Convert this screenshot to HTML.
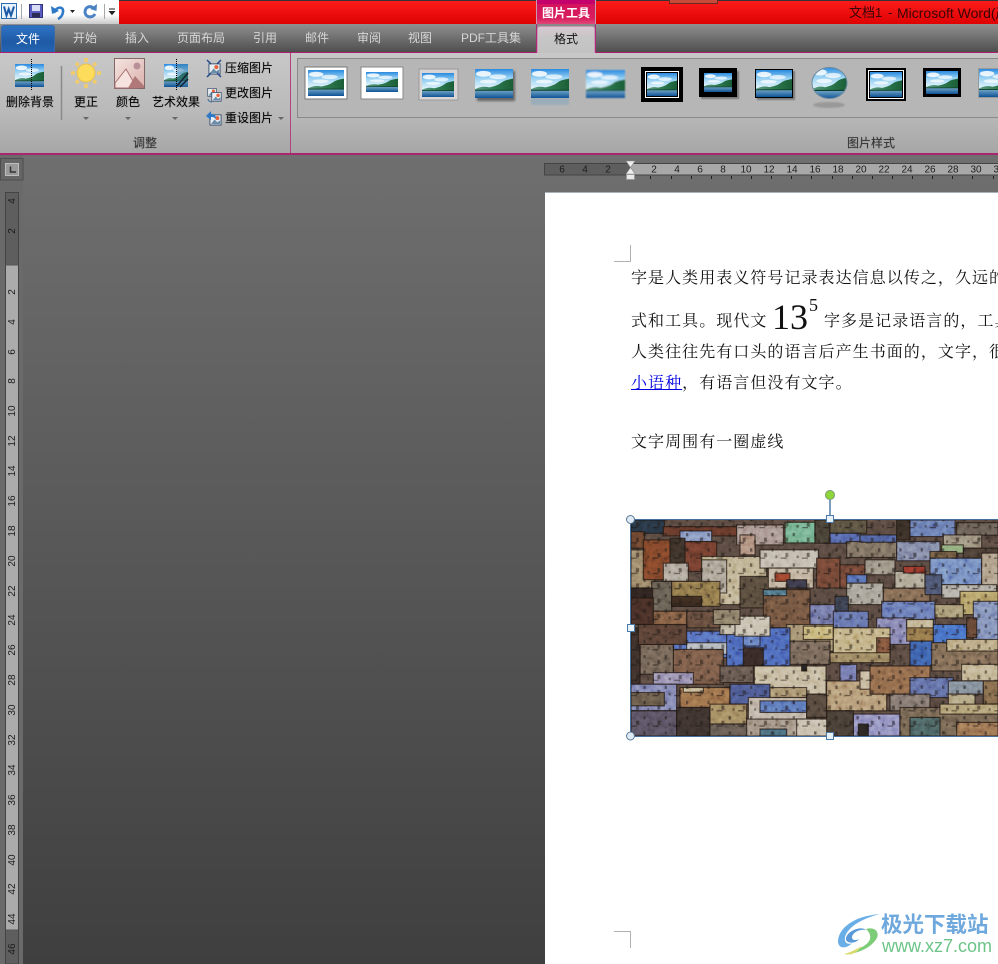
<!DOCTYPE html>
<html lang="zh"><head><meta charset="utf-8"><title>文档1 - Microsoft Word</title>
<style>
html,body{margin:0;padding:0;width:998px;height:964px;overflow:hidden;background:#555}
body{position:relative;font-family:"Liberation Sans","WenQuanYi Zen Hei","Noto Sans CJK SC",sans-serif;font-size:12px}
div,span.a,svg.a{position:absolute}
.t{white-space:nowrap;line-height:16px}
.tab{top:30px;color:#d6d6d6;font-size:12px}
.lb{color:#000;font-size:12px;white-space:nowrap;line-height:16px;text-shadow:0 0 1px rgba(0,0,0,.3)}
.doc{position:absolute;left:631px;white-space:nowrap;font-family:"Liberation Serif","Noto Serif CJK SC",serif;font-size:16px;letter-spacing:1.05px;color:#111;line-height:20px}
.arr{width:0;height:0;border-left:3px solid transparent;border-right:3px solid transparent;border-top:3px solid #666}
</style></head><body>
<svg width="0" height="0" style="position:absolute"><defs>
<linearGradient id="sky" x1="0" y1="0" x2="0" y2="1"><stop offset="0" stop-color="#2a8ae0"/><stop offset=".3" stop-color="#96d0f2"/><stop offset=".65" stop-color="#dff2fa"/></linearGradient>
<linearGradient id="wat" x1="0" y1="0" x2="0" y2="1"><stop offset="0" stop-color="#7eb0cc"/><stop offset="1" stop-color="#0e5296"/></linearGradient>
<linearGradient id="hil" x1="0" y1="0" x2="1" y2="0"><stop offset="0" stop-color="#5e9c88"/><stop offset=".5" stop-color="#2e7a50"/><stop offset="1" stop-color="#1a5e36"/></linearGradient>
<symbol id="L" viewBox="0 0 40 30" preserveAspectRatio="none">
<rect width="40" height="30" fill="url(#sky)"/>
<ellipse cx="9" cy="5" rx="8" ry="3" fill="#fff" opacity=".85"/><ellipse cx="24" cy="8" rx="9" ry="2.5" fill="#fff" opacity=".7"/><ellipse cx="14" cy="13" rx="9" ry="2" fill="#fff" opacity=".7"/>
<rect y="21" width="40" height="9" fill="url(#wat)"/>
<path d="M0 21 C6 18 10 18 15 19 C20 18 24 17 28 14 C32 11 36 11 40 10 V22 H0Z" fill="url(#hil)"/>
<path d="M0 21.500H40V22.500H0Z" fill="#0c3d2a"/>
</symbol>
<symbol id="P" viewBox="0 0 14 14"><rect x="1" y="2" width="12" height="11" fill="#e8eef4" stroke="#39506e"/><path d="M2 12 L6 7 L9 10 L12 8 V12Z" fill="#6c8ca8"/><circle cx="9" cy="5.5" r="2.2" fill="#e8643c"/></symbol>
</defs></svg>

<!-- title bar -->
<div style="left:0;top:0;width:119px;height:24px;background:linear-gradient(#fff 0,#fff 60%,#c9c9c9 100%)"></div>
<div style="left:119px;top:0;width:879px;height:24px;background:linear-gradient(#333 0,#333 1px,#fb1b1b 1px,#df0202 100%)"></div>
<div style="left:669px;top:0;width:49px;height:4px;background:#c84a3a;border:1px solid #6a2a20;border-top:0;box-sizing:border-box"></div>
<div class="t" style="left:849px;top:5px;font-size:13px;color:#3a0505">文档1</div>
<div class="t" style="left:888px;top:5px;font-size:13px;color:#3a0505">-</div>
<div class="t" style="left:897px;top:5px;font-size:14px;color:#3a0505">Microsoft Word(产</div>

<!-- QAT icons -->
<svg class="a" style="left:0;top:0" width="119" height="24">
<rect x="1.5" y="3.5" width="15" height="15" fill="#e8f2fb" stroke="#2a6cb0"/><path d="M4 6.5 L6.5 15.5 L8.7 9 L11 15.5 L14 6.5" fill="none" stroke="#1d5aa6" stroke-width="2"/>
<path d="M21.5 4V19M104.500 4V19" stroke="#a8a8a8"/>
<rect x="29.500" y="4.500" width="13" height="13" fill="#5a5cc0" stroke="#33337a"/><rect x="32" y="5" width="8" height="6" fill="#d8dcf4"/><rect x="32" y="13" width="8" height="4" fill="#2b2b55"/>
<path d="M54 13 C56 6 64 6 63 12 C62.500 16 60 18 58 19" fill="none" stroke="#2e78c8" stroke-width="2.600"/><path d="M51 6 L52 14 L59 11Z" fill="#2e78c8"/>
<path d="M70 10h5l-2.500 3z" fill="#222"/>
<path d="M94 9 C92 5 85 6 85 12 C85 17 92 19 95 14" fill="none" stroke="#4b82c4" stroke-width="3"/><path d="M97 4 L96.500 11 L90 9Z" fill="#4b82c4"/>
<path d="M109 9h6M109.500 11.500h5l-2.500 3z" stroke="#222" fill="#222"/>
</svg>

<!-- tab strip -->
<div style="left:0;top:24px;width:998px;height:28px;background:linear-gradient(#909090,#4e4e4e)"></div>
<div style="left:0;top:52px;width:998px;height:1px;background:#a8206f"></div>
<div class="t" style="left:1px;top:25px;width:54px;height:27px;background:linear-gradient(#2f74c4,#1f5aa6 60%,#2364b0);border:1px solid #3a6aa8;border-bottom:0;box-sizing:border-box;border-radius:3px 3px 0 0;color:#fff;text-align:center;line-height:26px;font-size:12px">文件</div>
<div class="t tab" style="left:73px">开始</div>
<div class="t tab" style="left:125px">插入</div>
<div class="t tab" style="left:177px">页面布局</div>
<div class="t tab" style="left:253px">引用</div>
<div class="t tab" style="left:305px">邮件</div>
<div class="t tab" style="left:357px">审阅</div>
<div class="t tab" style="left:408px">视图</div>
<div class="t tab" style="left:461px">PDF工具集</div>

<!-- contextual tab -->
<div style="left:536px;top:0;width:60px;height:24px;background:linear-gradient(#c4006c 0,#c4006c 4px,#d4145e 4px,#d81c5c 18px,#e04878 24px);box-sizing:border-box;border-left:1px solid #c89ab0;border-right:1px solid #c89ab0"></div>
<div class="t" style="left:536px;top:5px;width:60px;text-align:center;color:#fff;font-weight:bold;font-size:12px">图片工具</div>
<div style="left:536px;top:24px;width:60px;height:29px;background:linear-gradient(#8a8a8a,#505050);border-left:1px solid #b02878;border-right:1px solid #b02878;box-sizing:border-box"></div>
<div class="t" style="left:537px;top:26px;width:58px;height:28px;background:linear-gradient(#d8c8d0,#c6c6c6 40%,#c2c2c2);border:1px solid #c898b4;border-bottom:0;box-sizing:border-box;border-radius:3px 3px 0 0;text-align:center;line-height:25px;color:#111;font-size:12px">格式</div>

<!-- ribbon -->
<div style="left:0;top:53px;width:998px;height:101px;background:linear-gradient(#c8c8c8,#b9b9b9 60%,#a6a6a6)"></div>
<div style="left:0;top:153px;width:998px;height:2px;background:#a8266f"></div>
<div style="left:290px;top:53px;width:1px;height:100px;background:#b0447f"></div>
<div style="left:297px;top:58px;width:701px;height:60px;border:1px solid #8a8a8a;border-right:0;box-sizing:border-box;background:#b6b6b6"></div>

<svg class="a" style="left:0;top:53px" width="292" height="80">
<use href="#L" x="15" y="11" width="29" height="23"/>
<path d="M31.500 6V37" stroke="#000" stroke-dasharray="1 1"/>
<path d="M61.500 13V67" stroke="#8a8a8a" stroke-width="1.500"/>
<g stroke="#f3cc6a" stroke-width="3.500"><path d="M86 5V9M86 31V35M71 20H75M97 20H101M76 10L78.500 12.500M93.500 27.500L96 30M96 10L93.500 12.500M78.500 27.500L76 30"/></g>
<circle cx="86" cy="20" r="9" fill="#fcdc5a" stroke="#eac050"/>
<defs><linearGradient id="pk" x1="0" y1="0" x2="1" y2="1"><stop offset="0" stop-color="#f4e4e0"/><stop offset="1" stop-color="#dcb0ac"/></linearGradient></defs>
<rect x="114.500" y="5.500" width="30" height="30" fill="url(#pk)" stroke="#806868"/>
<path d="M115 30 L126 16 L137 35H115Z" fill="#f6e2de" stroke="#a87070"/><path d="M128 35 L135 23 L144 33V35Z" fill="#b07878"/><circle cx="137" cy="13" r="3.500" fill="#b89098"/>
<use href="#L" x="164" y="11" width="24" height="23"/>
<path d="M177 11H188V34H177Z" fill="#3878a0" opacity=".45"/><path d="M177 33L188 20M180 34L188 26" stroke="#123" stroke-width="1.500"/>
<path d="M176.500 6V37" stroke="#000" stroke-dasharray="1 1"/>
<use href="#P" x="208" y="9" width="13" height="13"/>
<path d="M207 7L211 11M221 7L217 11M207 24L211 20M221 24L217 20" stroke="#24488c" stroke-width="1.500"/>
<use href="#P" x="207" y="34" width="10" height="10"/><use href="#P" x="211" y="38" width="11" height="11"/>
<path d="M208 46c0 2 2 3 4 3" stroke="#3a6a9a" fill="none"/>
<use href="#P" x="209" y="60" width="13" height="13"/>
<path d="M206 63L211 58V61C214 61 216 62 216 66C214 64 213 64 211 64V67Z" fill="#2e78c8"/>
</svg>
<div class="lb" style="left:6px;top:94px">删除背景</div>
<div class="lb" style="left:74px;top:94px">更正</div>
<div class="lb" style="left:116px;top:94px">颜色</div>
<div class="lb" style="left:152px;top:94px">艺术效果</div>
<div class="arr" style="left:83px;top:117px"></div>
<div class="arr" style="left:125px;top:117px"></div>
<div class="arr" style="left:172px;top:117px"></div>
<div class="arr" style="left:278px;top:117px"></div>
<div class="lb" style="left:225px;top:60px">压缩图片</div>
<div class="lb" style="left:225px;top:85px">更改图片</div>
<div class="lb" style="left:225px;top:110px">重设图片</div>
<div class="lb" style="left:133px;top:135px;color:#333">调整</div>
<div class="lb" style="left:847px;top:135px;color:#333">图片样式</div>

<!-- gallery -->
<svg class="a" style="left:298px;top:59px" width="700" height="58" viewBox="298 59 700 58">
<defs><filter id="b2"><feGaussianBlur stdDeviation="1"/></filter><filter id="b1"><feGaussianBlur stdDeviation=".8"/></filter></defs>
<rect x="305" y="67" width="42" height="32" fill="#fff" stroke="#777"/><use href="#L" x="308" y="70" width="36" height="26"/>
<rect x="361" y="67" width="42" height="32" fill="#fff" stroke="#888"/><use href="#L" x="366" y="72" width="32" height="20"/>
<rect x="419" y="69" width="39" height="31" fill="#d8d4d4" stroke="#999"/><use href="#L" x="422" y="73" width="32" height="24"/>
<rect x="477" y="71" width="38" height="30" fill="#666" filter="url(#b2)"/><use href="#L" x="475" y="69" width="38" height="29"/>
<rect x="531" y="98" width="38" height="7" fill="#8aa8bc" opacity=".6" filter="url(#b1)"/><use href="#L" x="531" y="69" width="38" height="29"/>
<g filter="url(#b1)"><use href="#L" x="586" y="70" width="39" height="28"/></g>
<rect x="641" y="67" width="42" height="35" fill="#000"/><rect x="645.500" y="71.500" width="33" height="26" fill="#000" stroke="#fff"/><use href="#L" x="647" y="73" width="30" height="23"/>
<rect x="701" y="71" width="38" height="28" fill="#777" filter="url(#b1)"/><rect x="699" y="68" width="38" height="29" fill="#000"/><use href="#L" x="704" y="73" width="28" height="19"/>
<rect x="757" y="71" width="38" height="29" fill="#777" filter="url(#b1)"/><rect x="755" y="69" width="38" height="29" fill="#000"/><use href="#L" x="756" y="70" width="36" height="27"/>
<ellipse cx="829" cy="105" rx="16" ry="3" fill="#999" filter="url(#b1)"/><clipPath id="ov"><ellipse cx="829.500" cy="83" rx="17.500" ry="15.500"/></clipPath><g clip-path="url(#ov)"><use href="#L" x="812" y="67" width="35" height="32"/></g><ellipse cx="829.500" cy="83" rx="17.500" ry="15.500" fill="none" stroke="#6a8aa0"/>
<rect x="866" y="68" width="40" height="33" fill="#000"/><rect x="868.500" y="70.500" width="35" height="28" fill="#000" stroke="#fff"/><use href="#L" x="870" y="72" width="32" height="25"/>
<rect x="923" y="68" width="38" height="29" fill="#000"/><use href="#L" x="926" y="71" width="32" height="23"/>
<rect x="978" y="68" width="30" height="30" fill="#999"/><use href="#L" x="979" y="69" width="36" height="28"/>
</svg>

<!-- workspace -->
<div style="left:0;top:155px;width:998px;height:809px;background:linear-gradient(#6f6f6f,#3f3f3f)"></div>
<div style="left:0;top:155px;width:23px;height:809px;background:#6a6a6a"></div>

<!-- page -->
<div style="left:545px;top:192px;width:453px;height:772px;background:#fff;border-top:1px solid #a8b0bc;box-sizing:border-box"></div>

<!-- rulers -->
<svg class="a" style="left:0;top:155px" width="998" height="809" viewBox="0 155 998 809" font-family="Liberation Sans, sans-serif" font-size="10" fill="#1c1c1c" text-anchor="middle">
<rect x=".5" y="158.500" width="22.500" height="21.500" fill="#666" stroke="#4e4e4e"/>
<rect x="5.500" y="163.500" width="13" height="12" fill="#9a9a9a" stroke="#bdbdbd"/><path d="M10.500 166.500V172H16" stroke="#333" stroke-width="1.500" fill="none"/>
<rect x="5.500" y="192.500" width="13" height="771.500" fill="#5e5e5e" stroke="#444"/>
<rect x="6" y="265" width="12" height="665" fill="#ababab"/><path d="M6 265H18M6 930H18" stroke="#555"/>
<rect x="544.500" y="163.500" width="453.500" height="11.500" fill="#5e5e5e" stroke="#444"/>
<rect x="631" y="164" width="367" height="10.500" fill="#a8a8a8"/>
<path d="M650.500 176v3M671.500 176v3M691.500 176v3M711.500 176v3M731.500 176v3M751.500 176v3M771.500 176v3M791.500 176v3M811.500 176v3M832.500 176v3M852.500 176v3M872.500 176v3M892.500 176v3M912.500 176v3M932.500 176v3M952.500 176v3M972.500 176v3M993.500 176v3" stroke="#222"/>
<text x="562" y="172.500">6</text><text x="585" y="172.500">4</text><text x="608" y="172.500">2</text>
<text x="654" y="172.500">2</text><text x="677" y="172.500">4</text><text x="700" y="172.500">6</text><text x="723" y="172.500">8</text><text x="746" y="172.500">10</text><text x="769" y="172.500">12</text><text x="792" y="172.500">14</text><text x="815" y="172.500">16</text><text x="838" y="172.500">18</text><text x="861" y="172.500">20</text><text x="884" y="172.500">22</text><text x="907" y="172.500">24</text><text x="930" y="172.500">26</text><text x="953" y="172.500">28</text><text x="976" y="172.500">30</text><text x="999" y="172.500">32</text>
<g>
<text transform="translate(15,201) rotate(-90)">4</text><text transform="translate(15,231) rotate(-90)">2</text><text transform="translate(15,292) rotate(-90)">2</text><text transform="translate(15,322) rotate(-90)">4</text><text transform="translate(15,352) rotate(-90)">6</text><text transform="translate(15,381) rotate(-90)">8</text><text transform="translate(15,411) rotate(-90)">10</text><text transform="translate(15,441) rotate(-90)">12</text><text transform="translate(15,471) rotate(-90)">14</text><text transform="translate(15,501) rotate(-90)">16</text><text transform="translate(15,531) rotate(-90)">18</text><text transform="translate(15,561) rotate(-90)">20</text><text transform="translate(15,591) rotate(-90)">22</text><text transform="translate(15,620) rotate(-90)">24</text><text transform="translate(15,650) rotate(-90)">26</text><text transform="translate(15,680) rotate(-90)">28</text><text transform="translate(15,710) rotate(-90)">30</text><text transform="translate(15,740) rotate(-90)">32</text><text transform="translate(15,770) rotate(-90)">34</text><text transform="translate(15,800) rotate(-90)">36</text><text transform="translate(15,830) rotate(-90)">38</text><text transform="translate(15,860) rotate(-90)">40</text><text transform="translate(15,889) rotate(-90)">42</text><text transform="translate(15,919) rotate(-90)">44</text><text transform="translate(15,949) rotate(-90)">46</text>
</g>
<path d="M626 161H635L630.500 167.500L635 174H626L630.500 167.500Z" fill="#eee" stroke="#888" stroke-width=".6"/><rect x="626.500" y="174.500" width="8" height="5" fill="#e8e8e8" stroke="#999"/>
<path d="M630.500 245V261.500H614M614 931.500H630.500V948" fill="none" stroke="#b0b0b0"/>
</svg>

<!-- text -->
<div class="doc" style="top:269px">字是人类用表义符号记录表达信息以传之，久远的</div>
<div class="doc" style="top:312px">式和工具。现代文</div>
<div class="a" style="left:772px;top:296px;font-family:'Liberation Serif',serif;font-size:36px;line-height:42px;letter-spacing:0;color:#111;white-space:nowrap">13</div>
<div class="a" style="left:809px;top:295px;font-family:'Liberation Serif',serif;font-size:18px;line-height:20px;color:#111">5</div>
<div class="doc" style="top:312px;left:824px">字多是记录语言的，工具</div>
<div class="doc" style="top:343px">人类往往先有口头的语言后产生书面的，文字，很</div>
<div class="doc" style="top:374px"><span style="color:#0000e0;text-decoration:underline">小语种</span>，有语言但没有文字。</div>
<div class="doc" style="top:433px">文字周围有一圈虚线</div>

<!-- picture -->
<svg class="a" style="left:631px;top:520px" width="367" height="216" viewBox="33 105 1101 651" preserveAspectRatio="none">
<defs>
<filter id="n" x="0" y="0" width="100%" height="100%"><feTurbulence type="fractalNoise" baseFrequency=".06" numOctaves="3" seed="4"/><feColorMatrix type="saturate" values="0"/><feComponentTransfer><feFuncR type="linear" slope="1.8" intercept="-.4"/><feFuncG type="linear" slope="1.8" intercept="-.4"/><feFuncB type="linear" slope="1.8" intercept="-.4"/><feFuncA type="linear" slope="0" intercept="1"/></feComponentTransfer></filter>
<pattern id="w" width="64" height="46" patternUnits="userSpaceOnUse"><rect x="6" y="6" width="7" height="10" fill="#1e1a18"/><rect x="48" y="20" width="9" height="13" fill="#231d1a"/><rect x="18" y="28" width="6" height="8" fill="#2a2420"/><rect x="34" y="34" width="18" height="4" fill="#1a1614"/></pattern>
</defs>
<rect x="33" y="105" width="1101" height="651" fill="#5c4c44"/>
<g stroke="#1e1612" stroke-width="3.500" stroke-opacity=".75">
<rect x="33" y="105" width="100" height="40" fill="#27384a"/><rect x="130" y="125" width="220" height="28" fill="#6a3b2c"/><rect x="33" y="140" width="40" height="50" fill="#6e4630"/>
<rect x="180" y="138" width="95" height="32" fill="#8ea4d8"/><rect x="350" y="120" width="140" height="60" fill="#b8a29c"/><rect x="360" y="150" width="45" height="60" fill="#c09a88"/>
<rect x="495" y="112" width="90" height="62" fill="#7cc49c"/><rect x="585" y="105" width="45" height="70" fill="#4a4438"/><rect x="630" y="105" width="110" height="40" fill="#5e5644"/>
<rect x="630" y="145" width="90" height="30" fill="#5a70c0"/><rect x="680" y="170" width="150" height="48" fill="#857868"/><rect x="720" y="150" width="110" height="22" fill="#5268b0"/><rect x="830" y="105" width="40" height="60" fill="#3a3028"/>
<rect x="870" y="105" width="135" height="50" fill="#6f86c6"/><rect x="1010" y="113" width="124" height="38" fill="#6e645a"/><rect x="970" y="150" width="115" height="40" fill="#a89c88"/><rect x="965" y="180" width="65" height="25" fill="#9cc088"/><rect x="1030" y="190" width="104" height="30" fill="#4e4238"/>
<rect x="830" y="170" width="130" height="58" fill="#8a93b8"/><rect x="930" y="200" width="80" height="30" fill="#7a6248"/>
<rect x="33" y="195" width="72" height="115" fill="#a89070"/><rect x="70" y="165" width="85" height="120" fill="#8a4a2c"/><rect x="190" y="170" width="100" height="90" fill="#7a4030"/><rect x="150" y="160" width="45" height="130" fill="#3e342c"/>
<rect x="245" y="215" width="195" height="145" fill="#d6c6a0"/><rect x="245" y="225" width="75" height="100" fill="#bcb4a4"/><rect x="130" y="235" width="75" height="55" fill="#c0b8ac"/>
<rect x="95" y="290" width="60" height="90" fill="#6c6458"/><rect x="155" y="290" width="145" height="75" fill="#9a8050"/><rect x="155" y="335" width="90" height="30" fill="#3c2c20"/><rect x="33" y="310" width="65" height="30" fill="#2e2420"/><rect x="33" y="340" width="67" height="80" fill="#4a3028"/>
<rect x="360" y="275" width="130" height="95" fill="#5c5040"/><rect x="430" y="315" width="140" height="115" fill="#7a5a44"/><rect x="430" y="315" width="70" height="18" fill="#5a8aa0"/><rect x="570" y="360" width="75" height="70" fill="#7a80b8"/>
<rect x="420" y="195" width="175" height="55" fill="#d8d0c0"/><rect x="445" y="250" width="135" height="60" fill="#d8c8b0"/><rect x="465" y="265" width="45" height="25" fill="#a84830"/><rect x="500" y="285" width="60" height="25" fill="#3c3c50"/>
<rect x="590" y="220" width="70" height="90" fill="#7a4a38"/><rect x="660" y="240" width="75" height="70" fill="#7a4a3a"/><rect x="735" y="225" width="90" height="45" fill="#a8a090"/><rect x="680" y="295" width="110" height="65" fill="#b8b4a8"/><rect x="680" y="270" width="60" height="25" fill="#5a78c8"/>
<rect x="645" y="335" width="40" height="60" fill="#3c4456"/><rect x="640" y="380" width="105" height="50" fill="#6a7cc0"/>
<rect x="785" y="350" width="160" height="70" fill="#6f84cc"/><rect x="790" y="310" width="140" height="40" fill="#8a7058"/><rect x="825" y="260" width="90" height="50" fill="#c0b8a4"/><rect x="850" y="245" width="65" height="20" fill="#a83c30"/>
<rect x="930" y="220" width="155" height="80" fill="#7c98d8"/><rect x="1085" y="205" width="49" height="100" fill="#c0ae94"/><rect x="965" y="300" width="165" height="40" fill="#c8c4bc"/><rect x="1020" y="320" width="114" height="70" fill="#c8b070"/><rect x="945" y="360" width="85" height="40" fill="#b8a880"/><rect x="1060" y="350" width="74" height="120" fill="#8a9cd0"/>
<rect x="915" y="270" width="50" height="60" fill="#4e5a7a"/>
<rect x="770" y="400" width="110" height="80" fill="#9090c8"/><rect x="860" y="405" width="80" height="65" fill="#a08050"/><rect x="860" y="405" width="80" height="25" fill="#d8c8a0"/><rect x="940" y="420" width="100" height="55" fill="#4a78e0"/><rect x="1040" y="400" width="30" height="60" fill="#6a4a38"/>
<rect x="870" y="470" width="70" height="75" fill="#3f68c0"/><rect x="935" y="475" width="199" height="85" fill="#8a745c"/><rect x="980" y="465" width="154" height="35" fill="#d0bc90"/><rect x="1025" y="540" width="109" height="50" fill="#d8c8a0"/>
<rect x="500" y="420" width="140" height="80" fill="#b09a78"/><rect x="550" y="425" width="90" height="40" fill="#e0cc88"/><rect x="640" y="430" width="170" height="80" fill="#d8c490"/><rect x="770" y="460" width="40" height="60" fill="#8a5a40"/><rect x="480" y="470" width="150" height="70" fill="#7e6e60"/><rect x="630" y="505" width="180" height="30" fill="#a89068"/>
<rect x="160" y="440" width="200" height="80" fill="#5a78d8"/><rect x="200" y="475" width="140" height="35" fill="#c8d0d8"/><rect x="320" y="430" width="190" height="115" fill="#4f6fd0"/><rect x="370" y="490" width="60" height="55" fill="#3a2c28"/><rect x="370" y="450" width="50" height="35" fill="#6a88d8"/>
<rect x="160" y="495" width="150" height="105" fill="#80604c"/><rect x="60" y="480" width="100" height="90" fill="#7a6a5c"/><rect x="33" y="430" width="27" height="170" fill="#3e302c"/><rect x="300" y="420" width="140" height="30" fill="#d8ceb8"/><rect x="345" y="395" width="105" height="60" fill="#e0d8c4"/>
<rect x="55" y="420" width="145" height="60" fill="#5e4438"/><rect x="200" y="380" width="100" height="50" fill="#6a5040"/><rect x="280" y="375" width="80" height="45" fill="#968870"/><rect x="100" y="380" width="100" height="40" fill="#8a6448"/><rect x="300" y="545" width="100" height="50" fill="#6a5c54"/>
<rect x="100" y="565" width="120" height="35" fill="#a8a0c8"/>
<rect x="403" y="545" width="215" height="85" fill="#ddd0b0"/><rect x="545" y="540" width="15" height="20" fill="#222"/><rect x="620" y="590" width="180" height="90" fill="#c8a880"/><rect x="720" y="560" width="50" height="55" fill="#e0d0b0"/><rect x="660" y="540" width="50" height="50" fill="#7a80c0"/>
<rect x="750" y="545" width="180" height="85" fill="#9a7050"/><rect x="870" y="580" width="130" height="60" fill="#6878b8"/><rect x="985" y="590" width="105" height="40" fill="#8a98a8"/><rect x="985" y="630" width="80" height="40" fill="#c8b890"/><rect x="1090" y="590" width="44" height="70" fill="#8a7050"/>
<rect x="810" y="630" width="120" height="50" fill="#8a7e78"/>
<rect x="33" y="600" width="137" height="80" fill="#8a90c8"/><rect x="33" y="625" width="100" height="40" fill="#6e604e"/><rect x="180" y="610" width="150" height="60" fill="#a87850"/><rect x="190" y="610" width="60" height="14" fill="#e0d0a8"/><rect x="330" y="600" width="120" height="60" fill="#5060a0"/><rect x="450" y="610" width="110" height="30" fill="#b8a078"/>
<rect x="385" y="640" width="175" height="80" fill="#d4c8b8"/><rect x="420" y="650" width="140" height="35" fill="#6080d0"/><rect x="33" y="680" width="137" height="76" fill="#5c5668"/><rect x="170" y="670" width="100" height="86" fill="#3e3430"/><rect x="270" y="660" width="110" height="60" fill="#b09468"/><rect x="270" y="720" width="120" height="36" fill="#6a6058"/>
<rect x="380" y="705" width="290" height="51" fill="#b0a090"/><rect x="530" y="705" width="140" height="51" fill="#e0d4c0"/><rect x="420" y="735" width="80" height="21" fill="#4a7084"/><rect x="700" y="690" width="140" height="66" fill="#9c9cd8"/><rect x="715" y="720" width="30" height="36" fill="#2a2624"/>
<rect x="560" y="630" width="60" height="70" fill="#5a4c40"/><rect x="620" y="680" width="80" height="76" fill="#4a4038"/><rect x="840" y="670" width="294" height="86" fill="#7c6c58"/><rect x="870" y="700" width="90" height="56" fill="#4e6a6a"/><rect x="960" y="660" width="174" height="30" fill="#c4b080"/><rect x="1010" y="715" width="124" height="41" fill="#a87c58"/>
</g>
<rect x="33" y="105" width="1101" height="651" fill="url(#w)" opacity=".55"/>
<rect x="33" y="105" width="1101" height="651" fill="#1a1410" opacity=".14"/>
<rect x="33" y="105" width="1101" height="651" filter="url(#n)" opacity=".3" style="mix-blend-mode:overlay"/>
</svg>
<svg class="a" style="left:620px;top:485px" width="378" height="260">
<path d="M10.500 34.500H378M10.500 34.500V251.500H378" fill="none" stroke="#466f9c"/>
<path d="M210 15V30" stroke="#7e9ec0" stroke-width="2"/>
<circle cx="210" cy="10" r="4.500" fill="#8ed63a" stroke="#7a9a70"/>
<circle cx="10.500" cy="34.500" r="4" fill="#dfeaf4" stroke="#5a7a98"/><circle cx="10.500" cy="251" r="4" fill="#dfeaf4" stroke="#5a7a98"/>
<rect x="206.500" y="30.500" width="7" height="7" fill="#e8f1f8" stroke="#4a7aa8"/><rect x="7.500" y="139.500" width="7" height="7" fill="#e8f1f8" stroke="#4a7aa8"/><rect x="206.500" y="247.500" width="7" height="7" fill="#e8f1f8" stroke="#4a7aa8"/>
</svg>

<!-- watermark -->
<svg class="a" style="left:836px;top:912px" width="50" height="46" viewBox="0 0 50 46">
<path d="M2 30C2 16 18 4 44 2C28 6 12 14 9 25C8 31 12 33 16 31C12 36 3 38 2 30Z" fill="#6aaee8"/>
<path d="M10 26C12 18 26 14 30 18C24 17 17 20 16 25C15.500 28 20 29 23 27C20 32 9 32 10 26Z" fill="#5a9ad8"/>
<path d="M30 17C40 14 46 22 38 30C32 37 20 42 10 42C20 38 32 34 34 27C35 23 33 20 30 17Z" fill="#7ccc78"/>
<path d="M8 42C16 40 22 36 26 34C22 40 16 44 8 42Z" fill="#d8dc70"/>
</svg>
<div class="t" style="left:881px;top:911px;font-family:'Liberation Sans','Noto Sans CJK SC',sans-serif;font-size:21.500px;line-height:28px;font-weight:bold;color:#6ea8dc">极光下载站</div>
<div class="t" style="left:882px;top:935px;font-size:18px;line-height:22px;color:#6cc488">www.xz7.com</div>
</body></html>
